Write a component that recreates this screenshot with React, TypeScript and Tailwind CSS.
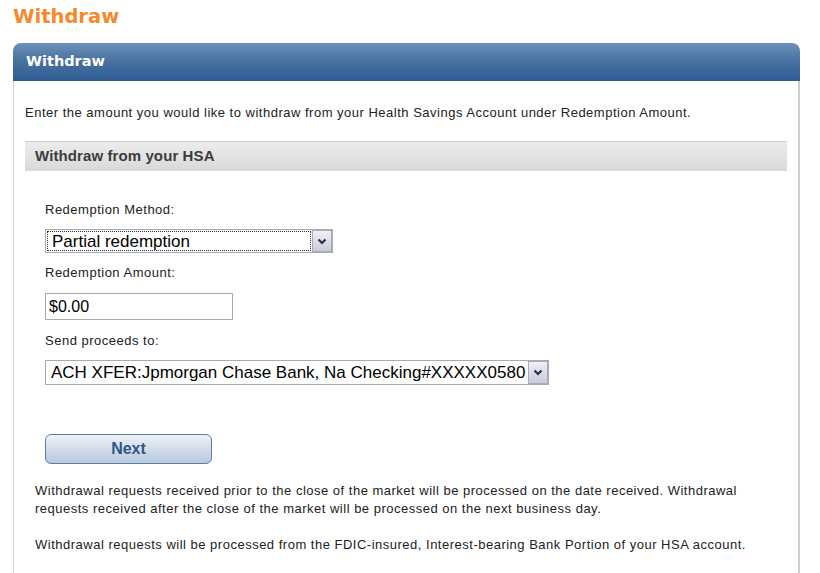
import React from 'react';

function Arrow() {
  return (
    <span className="flex w-[20px] shrink-0 items-center justify-center border border-[#a7abbd] bg-gradient-to-b from-[#f0f0f6] to-[#c9cad9]">
      <svg width="10" height="7" viewBox="0 0 10 7">
        <path d="M1.5 1.5 L5 5 L8.5 1.5" fill="none" stroke="#2b3048" strokeWidth="2.2" />
      </svg>
    </span>
  );
}

function App() {
  return (
    <div className="min-h-screen bg-white font-['Liberation_Sans',Arial,sans-serif] text-[13px] tracking-[0.5px] text-[#222]">
      {/* Page title */}
      <h1 className="pl-[13px] pt-[5px] h-[43px] font-['DejaVu_Sans',Verdana,sans-serif] text-[19.5px] font-bold leading-[24px] tracking-normal text-[#f7892c]">
        Withdraw
      </h1>

      {/* Panel */}
      <div className="ml-[13px] mr-[20px]">
        <div className="h-[38px] rounded-t-[8px] bg-gradient-to-b from-[#6c90b9] via-[#46709f] to-[#2d5c94] pl-[13px] flex items-center">
          <span className="font-['DejaVu_Sans',Verdana,sans-serif] text-[14.5px] font-bold tracking-normal text-white">Withdraw</span>
        </div>
        <div className="border-l-[1.5px] border-r-2 border-[#cfcfcf] px-[11px] pt-[23px] pb-[20px]">
          <p className="leading-[18px]">
            Enter the amount you would like to withdraw from your Health Savings Account under Redemption Amount.
          </p>

          <div className="mt-[19px] h-[30px] border-t border-[#cdcdcd] bg-gradient-to-b from-[#ececec] to-[#d9d9d9] pl-[10px] flex items-center">
            <span className="text-[15px] font-bold tracking-[0.1px] text-[#3c3c3c]">Withdraw from your HSA</span>
          </div>

          <div className="pl-[20px]">
            <div className="mt-[30px] leading-[18px]">Redemption Method:</div>
            <div className="mt-[10px] flex h-[24px] w-[288px] border border-[#a5acb5] bg-white">
              <div className="flex-1 flex items-center outline-1 outline-dotted outline-[#333] -outline-offset-2 pl-[6px] text-[17px] leading-none tracking-normal text-black">
                Partial redemption
              </div>
              <Arrow />
            </div>

            <div className="mt-[11px] leading-[18px]">Redemption Amount:</div>
            <div className="mt-[11px] flex h-[27px] w-[188px] items-center border border-[#a5acb5] bg-white pl-[3px] text-[16px] tracking-normal text-black">
              $0.00
            </div>

            <div className="mt-[12px] leading-[18px]">Send proceeds to:</div>
            <div className="mt-[10px] flex h-[25px] w-[504px] border border-[#a5acb5] bg-white">
              <div className="flex-1 flex items-center pl-[5px] text-[17px] leading-none tracking-normal text-black whitespace-nowrap">
                ACH XFER:Jpmorgan Chase Bank, Na Checking#XXXXX0580
              </div>
              <Arrow />
            </div>

            <button className="mt-[49px] h-[30px] w-[167px] rounded-[6px] border border-[#5b7ea9] bg-gradient-to-b from-[#eef2f7] to-[#b9c9dd] text-[16px] font-bold tracking-normal text-[#30548b]">
              Next
            </button>
          </div>

          <div className="pl-[10px] pr-[10px] leading-[18px]">
            <p className="mt-[18px]">
              Withdrawal requests received prior to the close of the market will be processed on the date received. Withdrawal requests received after the close of the market will be processed on the next business day.
            </p>
            <p className="mt-[18px]">
              Withdrawal requests will be processed from the FDIC-insured, Interest-bearing Bank Portion of your HSA account.
            </p>
          </div>
        </div>
      </div>
    </div>
  );
}

export default App;
